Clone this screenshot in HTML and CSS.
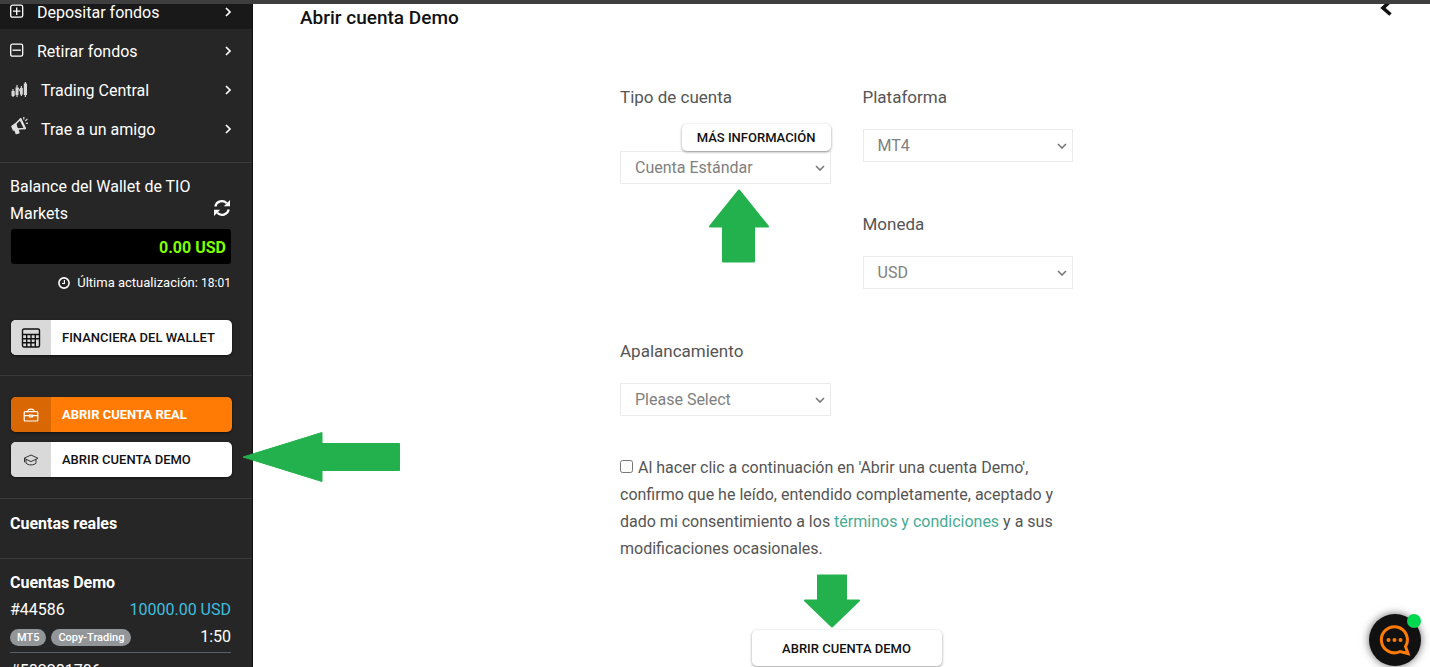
FILE: index.html
```html
<!DOCTYPE html>
<html lang="es">
<head>
<meta charset="utf-8">
<title>Abrir cuenta Demo</title>
<link rel="stylesheet" href="styles.css">
</head>
<body>
<div class="topbar"></div>
<div class="app">
  <aside class="sidebar">
    <nav class="nav">
      <a class="nav-item active" href="#">
        <svg class="nav-icon" viewBox="0 0 16 16" width="16" height="16" fill="none" stroke="currentColor" stroke-width="1.3"><rect x="1.7" y="1.2" width="12" height="12" rx="1.8"/><path d="M7.7 3.5v7.4M4 7.2h7.4"/></svg>
        <span>Depositar fondos</span>
        <svg class="chev" viewBox="0 0 8 10" width="8" height="10" fill="none" stroke="currentColor" stroke-width="1.7"><path d="M2 1l4 4-4 4"/></svg>
      </a>
      <a class="nav-item" href="#">
        <svg class="nav-icon" viewBox="0 0 16 16" width="16" height="16" fill="none" stroke="currentColor" stroke-width="1.3"><rect x="1.7" y="1.2" width="12" height="12" rx="1.8"/><path d="M3.5 7.2h8.4"/></svg>
        <span>Retirar fondos</span>
        <svg class="chev" viewBox="0 0 8 10" width="8" height="10" fill="none" stroke="currentColor" stroke-width="1.7"><path d="M2 1l4 4-4 4"/></svg>
      </a>
      <a class="nav-item" href="#">
        <svg class="nav-icon" viewBox="0 0 20 16" width="20" height="16" fill="#d8d8d8"><path d="M2.500 9h3.200v5H2.500zM6.500 5.500h3v7.500h-3zM11 6h2.800v6.500H11zM14.800 1.500h3.200V13h-3.200z"/><path d="M4 7v8M8 3v12M12.400 4v10M16.400 0v15M9 6l3.500 5" stroke="#d8d8d8" stroke-width="1.200"/></svg>
        <span>Trading Central</span>
        <svg class="chev" viewBox="0 0 8 10" width="8" height="10" fill="none" stroke="currentColor" stroke-width="1.7"><path d="M2 1l4 4-4 4"/></svg>
      </a>
      <a class="nav-item" href="#">
        <svg class="nav-icon high" viewBox="0 0 20 20" width="20" height="20" fill="none" stroke="#e0e0e0" stroke-width="1.6" stroke-linejoin="round"><path d="M6.500 8L11.500 3l4.500 9.500-8 .5z"/><path d="M6.500 8L3 10.500l1.500 3.500L8 13z" fill="#e0e0e0"/><path d="M6 14l1.300 3.500 2.500-.7-1-3.500z" fill="#e0e0e0"/><path d="M11.200 2.500l5 10.500" stroke-width="2.200"/><path d="M14.800 3.500V1M16.200 5.200l2.200-2.400M16.800 7.500l2.200-.3" stroke-width="1.200"/></svg>
        <span>Trae a un amigo</span>
        <svg class="chev" viewBox="0 0 8 10" width="8" height="10" fill="none" stroke="currentColor" stroke-width="1.7"><path d="M2 1l4 4-4 4"/></svg>
      </a>
    </nav>

    <section class="panel wallet">
      <div class="wallet-head">
        <span class="wallet-title">Balance del Wallet de TIO Markets</span>
        <button class="refresh" type="button" aria-label="Actualizar">
          <svg viewBox="0 0 18 18" width="18" height="18" fill="none" stroke="currentColor" stroke-width="2.200"><path d="M2.300 7.500A6.800 6.800 0 0 1 13.800 4.200M15.700 10.500A6.800 6.800 0 0 1 4.200 13.800"/><path d="M17 1v6.200h-6.200zM1 17v-6.200h6.200z" fill="currentColor" stroke="none"/></svg>
        </button>
      </div>
      <div class="balance">0.00 USD</div>
      <div class="updated">
        <svg viewBox="0 0 12 12" width="12" height="12" fill="none" stroke="currentColor"><circle cx="6" cy="6" r="5.100" stroke-width="1.600"/><path d="M6.400 3v3.500H4" stroke-width="1.200"/></svg>
        <span>Última actualización: <small>18:01</small></span>
      </div>
      <button class="side-btn" type="button">
        <span class="side-icon"><svg viewBox="0 0 20 20" width="20" height="20" fill="none" stroke="#111" stroke-width="1.400"><rect x="1.500" y="1" width="17" height="18" rx="1.500"/><path d="M1.500 6.500h17M1.500 10.700h17M1.500 14.800h13M5.700 6.500V19M10 6.500V19M14.300 6.500V19"/></svg></span>
        <span class="side-label">FINANCIERA DEL WALLET</span>
      </button>
    </section>

    <section class="panel actions">
      <button class="side-btn orange" type="button">
        <span class="side-icon"><svg viewBox="0 0 16 14" width="16" height="14" fill="none" stroke="#fff" stroke-width="1.200"><rect x="1.200" y="3.600" width="13.600" height="9.400" rx="1"/><path d="M5 3.500c0-2 .5-2.300 3-2.300s3 .3 3 2.300M1.200 7.700h5M9.800 7.700h5M6.500 7.200h3v1.600h-3z"/></svg></span>
        <span class="side-label">ABRIR CUENTA REAL</span>
      </button>
      <div class="pointed">
        <button class="side-btn" type="button">
          <span class="side-icon"><svg viewBox="0 0 16 14" width="16" height="14" fill="none" stroke="#333" stroke-width="1" stroke-linejoin="round"><path d="M1 5.300L8 2l7 3.300-7 3.300zM3 6.500v3.600c2 2.400 8 2.400 10 0V6.500M1.500 5.500v3.800"/></svg></span>
          <span class="side-label">ABRIR CUENTA DEMO</span>
        </button>
        <svg class="arrow arrow-left" viewBox="0 0 158 50" width="158" height="50" fill="#22b14c" stroke="#22b14c" stroke-width="1" stroke-linejoin="round"><path d="M1 25L80 .5V11.500h77.500v27H80v11z"/></svg>
      </div>
    </section>

    <section class="panel real"><h2>Cuentas reales</h2></section>

    <section class="panel demo">
      <h2>Cuentas Demo</h2>
      <div class="account">
        <div class="account-row"><span>#44586</span><span class="amount">10000.00 USD</span></div>
        <div class="account-row"><span class="badges"><span class="badge">MT5</span><span class="badge">Copy-Trading</span></span><span>1:50</span></div>
      </div>
      <div class="account next"><div class="account-row"><span>#582281706</span></div></div>
    </section>
  </aside>

  <main class="main">
    <header class="page-head">
      <h1>Abrir cuenta Demo</h1>
      <button class="back" type="button" aria-label="Volver"><svg viewBox="0 0 14 18" width="14" height="18" fill="none" stroke="#111" stroke-width="3.600"><path d="M11.500 2L4 9l7.500 6.500"/></svg></button>
    </header>

    <form class="form">
      <div class="field tipo">
        <label for="tipo">Tipo de cuenta</label>
        <button class="raised more" type="button">MÁS INFORMACIÓN</button>
        <div class="select"><select id="tipo"><option>Cuenta Estándar</option></select><svg viewBox="0 0 10 6" width="10" height="6"><path d="M1 1l4 4 4-4"/></svg></div>
        <svg class="arrow arrow-up" viewBox="0 0 62 74" width="62" height="74" fill="#22b14c" stroke="#22b14c" stroke-width="2" stroke-linejoin="round"><path d="M31 1.500L60 37.500H46V72.500H15V37.500H2z"/></svg>
      </div>
      <div class="field">
        <label for="plataforma">Plataforma</label>
        <div class="select"><select id="plataforma"><option>MT4</option></select><svg viewBox="0 0 10 6" width="10" height="6"><path d="M1 1l4 4 4-4"/></svg></div>
      </div>
      <div class="field">
        <label for="moneda">Moneda</label>
        <div class="select"><select id="moneda"><option>USD</option></select><svg viewBox="0 0 10 6" width="10" height="6"><path d="M1 1l4 4 4-4"/></svg></div>
      </div>
      <div class="field apal">
        <label for="apal">Apalancamiento</label>
        <div class="select"><select id="apal"><option>Please Select</option></select><svg viewBox="0 0 10 6" width="10" height="6"><path d="M1 1l4 4 4-4"/></svg></div>
      </div>
      <p class="terms"><input type="checkbox" id="acepto"><label for="acepto">Al hacer clic a continuación en 'Abrir una cuenta Demo', confirmo que he leído, entendido completamente, aceptado y dado mi consentimiento a los <a href="#">términos y condiciones</a> y a sus modificaciones ocasionales.</label></p>
      <div class="submit">
        <svg class="arrow arrow-down" viewBox="0 0 58 54" width="58" height="54" fill="#22b14c" stroke="#22b14c" stroke-width="2" stroke-linejoin="round"><path d="M15 1.500H43V26.500H56L29 52.500 2 26.500H15z"/></svg>
        <button class="raised open" type="submit">ABRIR CUENTA DEMO</button>
      </div>
    </form>
  </main>
</div>

<button class="chat" type="button" aria-label="Chat">
  <svg viewBox="0 0 32 32" width="32" height="32" fill="none" stroke="#ff7b05" stroke-width="3"><path d="M26.500 22.500A13 13 0 1 0 21 27.500l8 2z" stroke-linejoin="miter"/><g fill="#ff7b05" stroke="none"><circle cx="9.500" cy="16" r="2"/><circle cx="15.500" cy="16" r="2"/><circle cx="21.500" cy="16" r="2"/></g></svg>
  <span class="online"></span>
</button>
</body>
</html>
```
FILE: styles.css
```css
* { box-sizing: border-box; }
body {
  margin: 0;
  height: 100vh;
  overflow: hidden;
  display: flex;
  flex-direction: column;
  background: #fff;
  color: #555;
  font: 16px/27px Roboto, sans-serif;
}
h1, h2, p { margin: 0; }
button { font-family: inherit; border: 0; padding: 0; cursor: pointer; }
svg { display: block; flex: none; }

.topbar { height: 4px; flex: none; background: #3e3e3e; }
.app { flex: 1; min-height: 0; display: flex; overflow: hidden; }

.sidebar {
  width: 253px;
  flex: none;
  background: #262626;
  border-right: 1px solid #111;
  color: #fff;
}
.nav { margin-top: -14px; padding-bottom: 16px; }
.nav-item {
  display: flex;
  align-items: center;
  gap: 12px;
  height: 39px;
  padding: 5px 20px 0 9px;
  color: #fff;
  text-decoration: none;
}
.nav-item.active { background: #191919; }
.chev { margin-left: auto; }
.high { align-self: flex-start; margin-top: 4px; }

.panel { border-top: 1px solid #3a3a3a; padding: 10px 21px 20px 10px; }
.wallet-head { display: flex; justify-content: space-between; align-items: flex-end; height: 56px; padding-bottom: 2px; }
.wallet-title { max-width: 190px; }
.refresh { background: none; color: #fff; margin: 0 0 10px; }
.balance {
  height: 35px;
  margin-left: 1px;
  padding: 0 5px;
  border-radius: 3px;
  background: #000;
  color: #80ff00;
  font-weight: 700;
  line-height: 37px;
  text-align: right;
}
.updated {
  display: flex;
  align-items: center;
  justify-content: flex-end;
  gap: 7px;
  height: 38px;
  font-size: 13px;
}
.updated small { font-size: 12px; }
.side-btn {
  display: flex;
  width: 221px;
  height: 35px;
  margin-left: 1px;
  overflow: hidden;
  border-radius: 5px;
  background: #fff;
  color: #111;
  box-shadow: 0 1px 3px #0008;
}
.wallet .side-btn { margin-top: 18px; }
.side-icon {
  width: 40px;
  height: 100%;
  flex: none;
  display: flex;
  align-items: center;
  justify-content: center;
  background: #d9d9d9;
}
.side-label { padding-left: 11px; font-size: 13px; font-weight: 500; line-height: 35px; white-space: nowrap; }
.orange { background: #ff7b05; color: #fff; }
.orange .side-icon { background: #d96804; }
.orange .side-label { font-weight: 700; }
.actions { display: flex; flex-direction: column; gap: 10px; padding-top: 21px; padding-bottom: 21px; }
.pointed { position: relative; }

h2 { font-size: 16px; line-height: 27px; font-weight: 700; }
.real { padding-top: 11px; padding-bottom: 21px; }
.demo { padding-bottom: 0; }
.account-row { display: flex; justify-content: space-between; align-items: center; height: 27px; }
.account { border-bottom: 1px solid #56626b; padding-bottom: 2px; }
.next { padding-top: 4px; }
.amount { color: #3fbfdf; }
.badges { display: flex; gap: 5px; padding-top: 2px; }
.badge {
  padding: 0 7px;
  border-radius: 9px;
  background: #929699;
  font-size: 11px;
  font-weight: 500;
  line-height: 17px;
}

.main { flex: 1; min-width: 0; display: flex; flex-direction: column; align-items: center; padding: 0 37px 0 47px; }
.page-head { align-self: stretch; display: flex; justify-content: space-between; align-items: flex-start; }
h1 { color: #111; font-size: 19px; line-height: 27px; font-weight: 500; }
.back { background: none; margin-top: -5px; }
.form {
  width: 100%;
  max-width: 453px;
  margin-top: 53px;
  display: grid;
  grid-template-columns: 1fr 1fr;
  column-gap: 32px;
}
.field { height: 127px; position: relative; display: flex; flex-direction: column; }
.field label { margin-bottom: 18px; font-size: 17px; }
.tipo { grid-row: span 2; }
.tipo label { margin-bottom: 13px; }
.apal { grid-column: 1; }
.select { position: relative; }
.select select {
  appearance: none;
  width: 100%;
  height: 33px;
  padding: 0 14px;
  border: 1px solid #ebebeb;
  border-radius: 0;
  background: #fff;
  color: #808080;
  font: 16px Roboto, sans-serif;
}
.select svg { position: absolute; right: 6px; top: 14px; fill: none; stroke: #777; stroke-width: 1.6; pointer-events: none; }
.raised {
  border-radius: 5px;
  background: #fff;
  color: #111;
  font-size: 13px;
  font-weight: 500;
  box-shadow: 0 1px 3px #0006;
}
.more { position: relative; z-index: 1; align-self: flex-end; height: 27px; padding: 0 15px; }
.terms { grid-column: 1 / -1; margin-top: -11px; }
.terms input { width: 13px; height: 13px; margin: 0 5px 0 0; }
.terms a { color: #48ab94; text-decoration: none; }
.submit { grid-column: 1 / -1; margin-top: 68px; display: flex; justify-content: center; position: relative; }
.open { width: 190px; height: 36px; }

.arrow { position: absolute; z-index: 2; }
.arrow-left { left: 232px; top: -10px; }
.arrow-up { left: 88px; top: 105px; }
.arrow-down { left: 183px; top: -56px; }

.chat {
  position: absolute;
  right: 9px;
  bottom: 1px;
  width: 52px;
  height: 52px;
  display: flex;
  align-items: center;
  justify-content: center;
  border-radius: 50%;
  background: #111;
  box-shadow: 0 0 8px #0009;
}
.online { position: absolute; right: 0; top: 0; width: 14px; height: 14px; border-radius: 50%; background: #00d84f; }
```
